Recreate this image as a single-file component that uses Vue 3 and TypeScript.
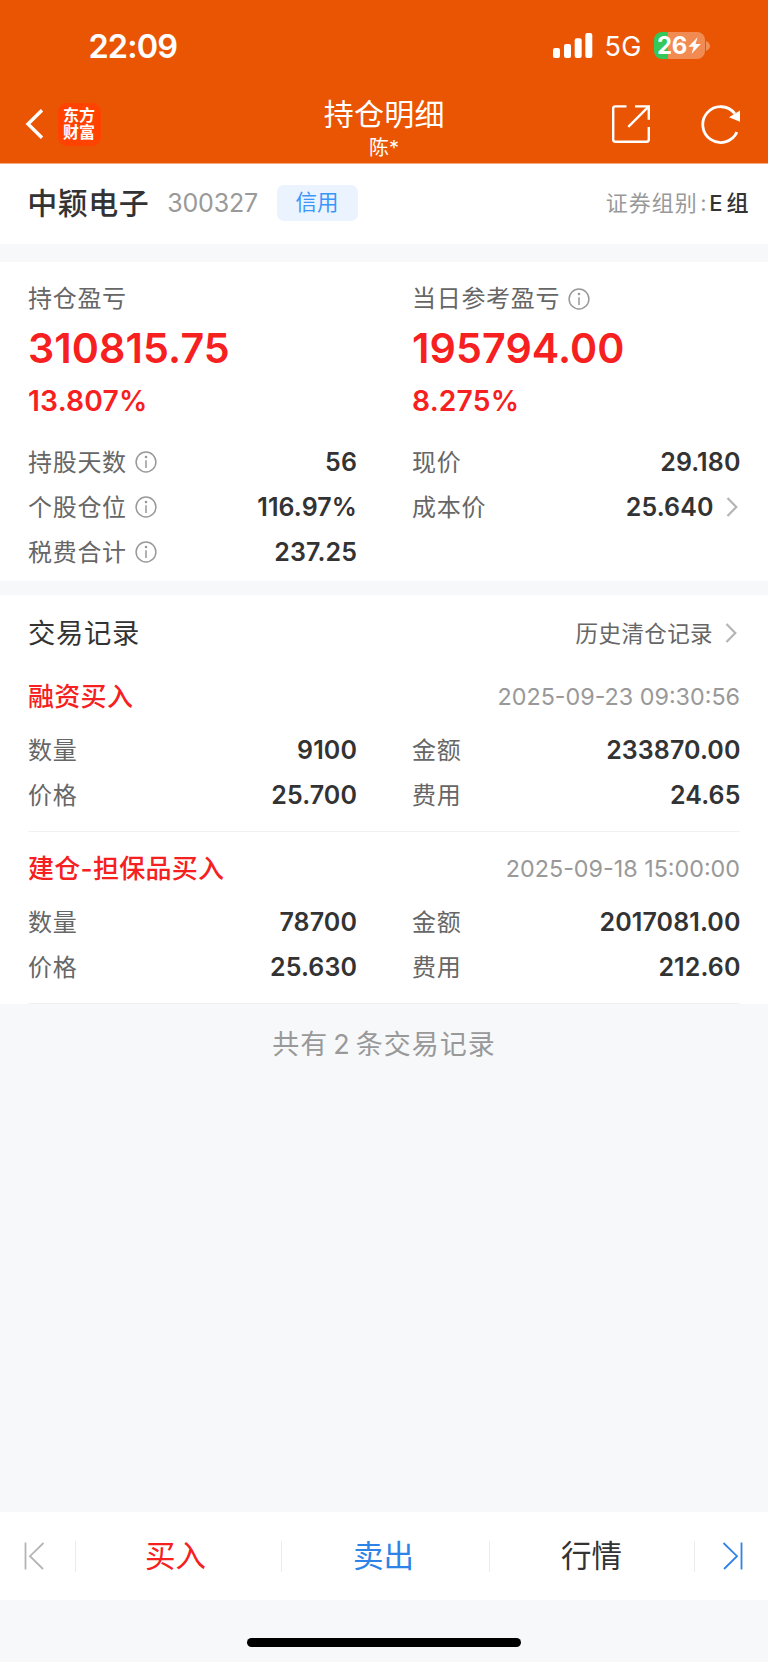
<script setup lang="ts">
interface Metric { label: string; value: string; info?: boolean; arrow?: boolean }
interface TradeRecord { title: string; time: string; items: Metric[] }

const metrics: Metric[] = [
  { label: '持股天数', value: '56', info: true },
  { label: '现价', value: '29.180' },
  { label: '个股仓位', value: '116.97%', info: true },
  { label: '成本价', value: '25.640', arrow: true },
  { label: '税费合计', value: '237.25', info: true },
]
const records: TradeRecord[] = [
  {
    title: '融资买入',
    time: '2025-09-23 09:30:56',
    items: [
      { label: '数量', value: '9100' },
      { label: '金额', value: '233870.00' },
      { label: '价格', value: '25.700' },
      { label: '费用', value: '24.65' },
    ],
  },
  {
    title: '建仓-担保品买入',
    time: '2025-09-18 15:00:00',
    items: [
      { label: '数量', value: '78700' },
      { label: '金额', value: '2017081.00' },
      { label: '价格', value: '25.630' },
      { label: '费用', value: '212.60' },
    ],
  },
]
</script>

<template>
  <div class="page">
    <header class="top">
      <div class="status">
        <span class="clock">22:09</span>
        <div class="signals">
          <svg class="bars" width="40" height="26" viewBox="0 0 40 26" fill="#fff">
            <rect x="0" y="15" width="7" height="10" rx="2" />
            <rect x="11" y="11" width="7" height="14" rx="2" />
            <rect x="21.7" y="5.2" width="7" height="19.8" rx="2" />
            <rect x="32.3" y="0" width="7" height="25" rx="2" />
          </svg>
          <span class="net">5G</span>
          <span class="battery">26<svg width="13" height="17" viewBox="0 0 13 17"><path d="M9.600.3.4 9.800h5.200L3.600 16.700 12.800 7H7.500Z" fill="#fff" /></svg></span>
          <svg class="cap" width="4" height="10" viewBox="0 0 4 10"><path d="M0 0Q4 2 4 5T0 10Z" fill="#fff" opacity=".35" /></svg>
        </div>
      </div>
      <nav class="nav">
        <div class="nav-left">
          <svg width="20" height="34" viewBox="0 0 20 34"><path d="M17 3.200 3 17 17 30.800" fill="none" stroke="#fff" stroke-width="3.400" /></svg>
          <span class="logo"><span>东方</span><span>财富</span></span>
        </div>
        <div class="nav-title">
          <h1>持仓明细</h1>
          <p>陈*</p>
        </div>
        <div class="nav-right">
          <svg width="40" height="40" viewBox="0 0 40 40" fill="none" stroke="#fff" stroke-width="2.400">
            <path d="M15.500 2.400H4.400Q2.200 2.400 2.200 4.600V35.600Q2.200 37.800 4.400 37.800H35.600Q37.800 37.800 37.800 35.600V23" />
            <path d="M24 2.400H37.800V15.700M37.800 2.400 17.300 22.900" />
          </svg>
          <svg width="42" height="42" viewBox="0 0 42 42">
            <path d="M36.900 29.200A17.900 17.900 0 1 1 34.800 10.600" fill="none" stroke="#fff" stroke-width="2.800" />
            <path d="M40 7.500V18.700L29 14.300Z" fill="#fff" />
          </svg>
        </div>
      </nav>
    </header>

    <section class="stock">
      <h2>中颖电子</h2>
      <span class="code">300327</span>
      <span class="pill">信用</span>
      <p class="group"><span>证券组别</span><span class="colon">:</span><b>E 组</b></p>
    </section>

    <section class="summary">
      <div class="profit">
        <div>
          <p class="label">持仓盈亏</p>
          <p class="amount">310815.75</p>
          <p class="rate">13.807%</p>
        </div>
        <div>
          <p class="label">当日参考盈亏
            <svg class="info" viewBox="0 0 22 22"><circle cx="11" cy="11" r="9.900" /><path d="M11 9.200V17" /><circle class="dot" cx="11" cy="6" r="1.300" /></svg>
          </p>
          <p class="amount">195794.00</p>
          <p class="rate">8.275%</p>
        </div>
      </div>
      <dl class="grid">
        <div v-for="m in metrics" :key="m.label" class="cell">
          <dt class="label">{{ m.label }}
            <svg v-if="m.info" class="info" viewBox="0 0 22 22"><circle cx="11" cy="11" r="9.900" /><path d="M11 9.200V17" /><circle class="dot" cx="11" cy="6" r="1.300" /></svg>
          </dt>
          <dd>{{ m.value }}<svg v-if="m.arrow" class="chev" viewBox="0 0 12 20"><path d="M1.500 1 10.300 10 1.500 19" /></svg></dd>
        </div>
      </dl>
    </section>

    <section class="trades">
      <div class="trades-head">
        <h3>交易记录</h3>
        <a class="history">历史清仓记录<svg class="chev" viewBox="0 0 12 20"><path d="M1.500 1 10.300 10 1.500 19" /></svg></a>
      </div>
      <article v-for="r in records" :key="r.time" class="record">
        <div class="record-head"><h4>{{ r.title }}</h4><time>{{ r.time }}</time></div>
        <dl class="grid">
          <div v-for="i in r.items" :key="i.label" class="cell">
            <dt class="label">{{ i.label }}</dt>
            <dd>{{ i.value }}</dd>
          </div>
        </dl>
      </article>
    </section>

    <p class="total">共有 2 条交易记录</p>

    <footer class="bottom">
      <div class="actions">
        <span class="edge"><svg width="22" height="30" viewBox="0 0 22 30" stroke="#b5b5b5"><path d="M2.500 1.500V28.500M20.500 2 7 15.200 20 28" /></svg></span>
        <span class="act buy">买入</span>
        <span class="act sell">卖出</span>
        <span class="act">行情</span>
        <span class="edge last"><svg width="22" height="30" viewBox="0 0 22 30" stroke="#2e83e6"><path d="M19.500 1.500V28.500M1.500 2 15 15.200 2 28" /></svg></span>
      </div>
      <div class="home"></div>
    </footer>
  </div>
</template>

<style>
body { background: #f7f8fa; }
</style>

<style scoped>
.page, .page * { box-sizing: border-box; margin: 0; }
.page {
  display: flex; flex-direction: column; width: 768px; height: 1662px; overflow: hidden;
  background: #f7f8fa; color: #333; line-height: 1.2;
  font-family: Inter, "Noto Sans CJK SC", sans-serif; font-size: 24px; white-space: nowrap;
}
.page > * { flex: none; }
svg { flex: none; display: block; }

.top { height: 164px; background: #ea5504; color: #fff; border-bottom: 1px solid #f4aa80; }
.status { height: 92px; display: flex; justify-content: space-between; align-items: center; padding: 0 58px 0 88.500px; }
.clock { font-size: 32.500px; font-weight: 600; letter-spacing: -.9px; }
.signals { display: flex; align-items: center; }
.net { font-size: 27px; letter-spacing: .2px; margin: 2px 12px 0 12px; }
.battery {
  display: flex; align-items: center; justify-content: center; gap: 1px; width: 51px; height: 27px; border-radius: 8px;
  background: linear-gradient(90deg, #34c759 13.500px, #f28b52 13.500px);
  font-size: 24px; line-height: 27px; font-weight: 700; letter-spacing: -.3px;
}
.cap { margin-left: 1.500px; }

.nav { height: 71px; display: grid; grid-template-columns: 1fr auto 1fr; }
.nav-left { display: flex; align-items: center; gap: 12.500px; padding: 0 0 6px 25px; height: 70px; }
.logo {
  width: 43px; height: 43px; border-radius: 9px; background: #ff4200; display: flex; flex-direction: column;
  align-items: center; justify-content: center; font-size: 16px; line-height: 17.500px; font-weight: 700;
}
.nav-title { text-align: center; }
h1 { font-size: 30px; font-weight: 400; line-height: 44px; letter-spacing: .3px; padding-left: .5px; }
.nav-title p { font-size: 20px; line-height: 24px; }
.nav-right { display: flex; justify-content: flex-end; align-items: center; gap: 49px; padding: 0 26px 6px 0; height: 70px; }

.stock { height: 80px; background: #fff; display: flex; align-items: center; padding: 0 19.500px 1.500px 27.300px; }
h2 { font-size: 30px; font-weight: 500; letter-spacing: .5px; }
.code { font-size: 25px; letter-spacing: -.2px; color: #999; margin-left: 18px; }
.pill {
  margin-left: 18.700px; width: 81px; height: 36px; border-radius: 7px; background: #ebf3ff; color: #3b96f9;
  font-size: 21.500px; line-height: 35px; text-align: center;
}
.group { margin-left: auto; display: flex; font-size: 22px; letter-spacing: 1px; color: #999; }
.colon { margin: 0 1.500px 0 2.500px; }
.group b { font-weight: 500; letter-spacing: 0; word-spacing: -1.800px; color: #333; }

.summary { margin-top: 18px; height: 319px; background: #fff; padding: 14px 28px 0; }
.profit { display: grid; grid-template-columns: 384px 1fr; height: 164px; }
.label { display: flex; align-items: center; gap: 8px; color: #666; font-size: 24px; letter-spacing: .7px; line-height: 45px; }
.amount { font-size: 41.200px; font-weight: 600; line-height: 54px; margin-bottom: 2px; letter-spacing: .1px; color: #f62020; }
.rate { font-size: 28.200px; font-weight: 600; line-height: 48px; letter-spacing: .2px; color: #f62020; }
.info { width: 22px; height: 22px; fill: none; stroke: #999; stroke-width: 1.500; }
.info .dot { fill: #999; stroke: none; }
.grid { display: grid; grid-template-columns: 329px 328.500px; column-gap: 55px; grid-auto-rows: 44.800px; }
.cell { display: flex; justify-content: space-between; align-items: center; }
dd { display: flex; align-items: center; font-size: 25px; font-weight: 600; letter-spacing: .1px; }
.chev { width: 12px; height: 20px; fill: none; stroke: #b5b5b5; stroke-width: 2.200; margin: 0 3px 0 12px; }

.trades { margin-top: 14px; height: 409px; background: #fff; padding: 0 28px; }
.trades-head { display: flex; justify-content: space-between; align-items: center; height: 76px; margin-bottom: -11.500px; }
h3 { font-size: 27.300px; font-weight: 400; letter-spacing: .7px; padding-top: 2px; }
.history { display: flex; align-items: center; font-size: 22.500px; letter-spacing: .4px; color: #666; }
.record { height: 172px; border-bottom: 1px solid #f0f1f3; }
.record-head { display: flex; justify-content: space-between; align-items: center; height: 68.500px; padding-top: 6px; }
h4 { font-size: 26px; font-weight: 500; letter-spacing: .3px; color: #f62020; }
time { font-size: 23.300px; color: #999; }

.total { margin-top: 19px; text-align: center; font-size: 27px; letter-spacing: 1px; word-spacing: -3.500px; line-height: 44px; color: #999; }

.bottom { margin-top: auto; height: 150px; }
.actions { display: grid; grid-template-columns: 74.500px 206px 208px 205px 1fr; height: 88px; background: #fff; align-items: center; }
.act { height: 31px; font-size: 30.500px; line-height: 30px; text-align: center; border-left: 1px solid #ececee; }
.buy { color: #f62020; padding-right: 5px; }
.sell { color: #2e83e6; padding-right: 3px; }
.edge svg { fill: none; stroke-width: 1.800; margin-left: 23px; }
.last { height: 31px; border-left: 1px solid #ececee; }
.last svg { margin-left: 27px; }
.home { width: 274px; height: 9px; border-radius: 5px; background: #000; margin: 38px auto 0; }
</style>
